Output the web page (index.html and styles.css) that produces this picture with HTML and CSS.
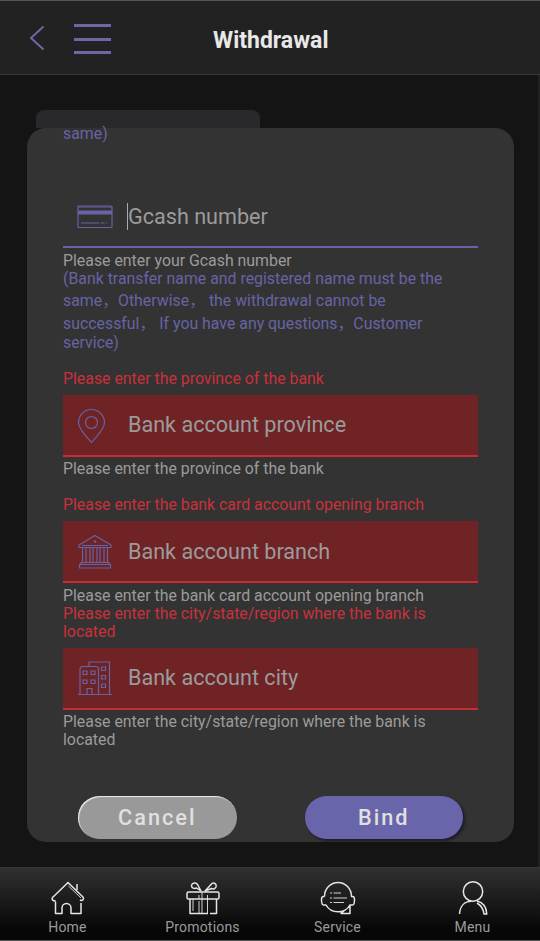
FILE: index.html
```html
<!doctype html>
<html lang="en">
<head>
	<meta charset="utf-8">
	<meta name="viewport" content="width=device-width, initial-scale=1.0">
	<title>Withdrawal</title>

	<link rel="stylesheet" href="styles.css">

</head>

<body>

	<header class="header">
		<svg class="back" viewBox="0 0 16 26"><path d="M14.500 1.500L2 13l12.500 11.500"/></svg>
		<div class="burger"><span></span><span></span><span></span></div>
		<h1>Withdrawal</h1>
	</header>

	<main class="page">
		<div class="tab"></div>

		<div class="modal">
			<div class="modal-body">
				<div class="note note-top">same)</div>

				<div class="field field-plain">
					<svg class="icon" viewBox="0 0 36 36"><rect x="1" y="8" width="34" height="21.500" rx="1"/><path class="fill" d="M1 12.500h34v4H1z"/><path d="M1 9h34"/><path stroke-dasharray="18 1.500 4 1.500" d="M4 25h26"/></svg>
					<span class="placeholder caret">Gcash number</span>
				</div>
				<div class="help">Please enter your Gcash number</div>
				<div class="note">
					<div>(Bank transfer name and registered name must be the</div>
					<div class="line-tall">same<i>，</i>Otherwise<i>，</i> the withdrawal cannot be</div>
					<div class="line-mid">successful<i>，</i> If you have any questions<i>，</i>Customer</div>
					<div>service)</div>
				</div>

				<div class="error error-first">Please enter the province of the bank</div>
				<div class="field">
					<svg class="icon" viewBox="0 0 36 36"><path d="M14.500 35.500C9 28.500 1.500 22.500 1.500 15.500a13 13 0 0 1 26 0c0 7-7.500 13-13 20z"/><circle cx="14.500" cy="15.500" r="6"/></svg>
					<span class="placeholder">Bank account province</span>
				</div>
				<div class="help">Please enter the province of the bank</div>

				<div class="error error-gap">Please enter the bank card account opening branch</div>
				<div class="field">
					<svg class="icon" viewBox="0 0 36 36"><path d="M18 2.500L2 12v2.500h32V12zM5 12.500h26M18 7v3M16.500 8.500h3"/><path d="M5.500 14.500v15M9 14.500v15M13 14.500v15M16 14.500v15M20 14.500v15M23 14.500v15M27 14.500v15M30.500 14.500v15"/><path d="M4 29.500h28v2H4zM2.500 31.500h31V35h-31z"/></svg>
					<span class="placeholder">Bank account branch</span>
				</div>
				<div class="help">Please enter the bank card account opening branch</div>

				<div class="error">Please enter the city/state/region where the bank is located</div>
				<div class="field">
					<svg class="icon" viewBox="0 0 36 36"><path d="M1 34.500h34M3 34V8.500l1.500-2H20l1.500 2V34M12 6.500V2h20.500v32M10 34v-5.500h5V34"/><path d="M6 11h4v3.500H6zM14 11h4v3.500h-4zM6 20h4v3.500H6zM14 20h4v3.500h-4zM24.500 7h4v3.500h-4zM24.500 15.500h4V19h-4zM24.500 24h4v3.500h-4z"/></svg>
					<span class="placeholder">Bank account city</span>
				</div>
				<div class="help">Please enter the city/state/region where the bank is located</div>

				<div class="buttons">
					<button class="btn btn-cancel">Cancel</button>
					<button class="btn btn-bind">Bind</button>
				</div>
			</div>
		</div>
	</main>

	<nav class="nav">
		<a class="nav-item">
			<svg viewBox="0 0 36 36"><path d="M5.500 21.500V33.500h6.500v-5.500a4.500 4.500 0 0 1 9 0v5.500h10V23M5.500 20.500c-2 1-4.500-1-3-3L18 2.500l15 14.500c1.500 2-.5 4.500-3 3"/><path class="thin" d="M18.500 6L31 18"/><path d="M27 10V4"/></svg>
			<span>Home</span>
		</a>
		<a class="nav-item">
			<svg viewBox="0 0 36 36"><rect x="2" y="12" width="32" height="7" rx="1.500"/><path d="M5 19v14.500h18M31.500 19v14.500H25"/><path class="thin" d="M14 15v4M14 21v12M17 12v21M22.500 15v18M8 19v12"/><path d="M16 11L12.500 4.500C11 2 7 2.500 6.500 5.500c0 2.500 2.500 3.500 5 2.500zM20 11l7-7.500c2-1.500 5 .5 4 3.500-.7 1.500-2.500 2.500-4.500 1.500z"/></svg>
			<span>Promotions</span>
		</a>
		<a class="nav-item">
			<svg viewBox="0 0 36 36"><path d="M4.500 16.500a13.500 14 0 0 1 27 0h1c1.500 0 2 1 2 3s-.5 5.500-2 5.500H30V33.500H21l3-2.500M4.500 16.500h-1c-1.500 0-2 1-2 3s.5 5.500 2 5.500H6c5 9 19 9 24 0"/><path class="thin" d="M10 13h2M13.500 13H21M10 18h2M13.500 18H27M10 22.500h2M13.500 22.500H24"/></svg>
			<span>Service</span>
		</a>
		<a class="nav-item">
			<svg viewBox="0 0 36 36"><circle cx="18" cy="11.500" r="9.700"/><path d="M4.500 34c.5-8 5-12.700 12-12.700M22 21c6 1.500 9.500 6.500 9.800 13H29c-.5-5-3-8.500-7-11"/></svg>
			<span>Menu</span>
		</a>
	</nav>

</body>
</html>
```
FILE: styles.css
```css
* {
	box-sizing: border-box;
}
body {
	background: #141414;
	font-family: Roboto, "Noto Sans CJK SC", sans-serif;
	color: #9b9b9b;
	margin: 0;
	height: 941px;
	display: flex;
	flex-direction: column;
	overflow: hidden;
}
.header {
	height: 75px;
	flex: none;
	background: #222;
	border-top: 1px solid #555;
	border-bottom: 1px solid #393939;
	display: grid;
	grid-template-columns: 45px 37px 1fr;
	padding: 0 0 0 29px;
	align-items: center;
}
.back {
	width: 16px;
	height: 26px;
	margin-top: 1px;
	fill: none;
	stroke: #6c68a6;
	stroke-width: 2;
}
.burger {
	height: 30px;
	display: flex;
	flex-direction: column;
	justify-content: space-between;
	margin-top: 3px;
}
.burger span {
	height: 3px;
	width: 37px;
	background: #6c68a6;
}
h1 {
	margin: 6px 0 0;
	padding-left: 102px;
	color: #e8e8e8;
	font-size: 23px;
	font-weight: bold;
	line-height: 28px;
	white-space: nowrap;
}
.page {
	height: 792px;
	flex: none;
	padding: 35px 26px 0 27px;
	border-right: 2px solid #222;
}
.tab {
	width: 224px;
	height: 18px;
	margin-left: 9px;
	background: #29292b;
	border-radius: 8px 8px 0 0;
}
.modal {
	width: 487px;
	height: 714px;
	background: #333;
	border-radius: 19px;
}
.modal-body {
	padding: 0 36px;
	font-size: 15.86px;
	line-height: 18px;
}
.note {
	color: #6763a4;
	white-space: nowrap;
}
.note i {
	font-style: normal;
	font-family: "Noto Sans CJK SC", sans-serif;
	line-height: 1;
}
.note-top {
	line-height: 12px;
	margin-bottom: 46px;
}
.line-tall {
	line-height: 26px;
}
.line-mid {
	line-height: 20px;
}
.error {
	color: #cb303a;
	margin-bottom: 7px;
}
.error-first {
	margin-top: 18px;
}
.error-gap {
	margin-top: 18px;
}
.field {
	height: 62px;
	background: #6f2325;
	border-bottom: 2px solid #c52d37;
	display: flex;
	align-items: center;
	padding-left: 14px;
	margin-bottom: 3.5px;
}
.field-plain {
	background: none;
	border-color: #6763a4;
}
.icon {
	width: 36px;
	height: 36px;
	margin-right: 15px;
	fill: none;
	stroke: #6763a4;
	stroke-width: 1.2;
}
.icon .fill {
	fill: #6763a4;
	stroke: none;
}
.placeholder {
	font-size: 21.6px;
	line-height: 26px;
	padding-top: 1px;
}
.caret {
	border-left: 1px solid #aaa;
	margin-left: -1px;
}
.buttons {
	display: flex;
	gap: 68px;
	padding-left: 15px;
	margin-top: 46.5px;
}
.btn {
	width: 158.5px;
	height: 43px;
	flex: none;
	border: 0;
	border-radius: 22px;
	padding: 1px 0 0;
	font-family: Roboto, sans-serif;
	font-size: 21.7px;
	font-weight: 500;
	letter-spacing: 2px;
	color: #e0e0e0;
}
.btn-cancel {
	background: #999;
	box-shadow: inset 1px 1px 1px #eee;
}
.btn-bind {
	background: #6965aa;
	box-shadow: 2px 2px 3px #1b1b25;
}
.nav {
	height: 74px;
	flex: none;
	display: grid;
	grid-template-columns: repeat(4, 1fr);
	background: linear-gradient(#303031, #1b1b1c 45%, #070707 85%);
	border-top: 1px solid #38383a;
	border-bottom: 1px solid #555;
}
.nav-item {
	display: flex;
	flex-direction: column;
	align-items: center;
	padding-top: 12px;
	font-size: 14px;
	line-height: 18px;
	letter-spacing: 0.2px;
}
.nav-item svg {
	width: 36px;
	height: 36px;
	margin-bottom: 2px;
	fill: none;
	stroke: #e6e6e6;
	stroke-width: 1.5;
	stroke-linejoin: round;
}
.nav-item .thin {
	stroke-width: 0.9;
}
```
